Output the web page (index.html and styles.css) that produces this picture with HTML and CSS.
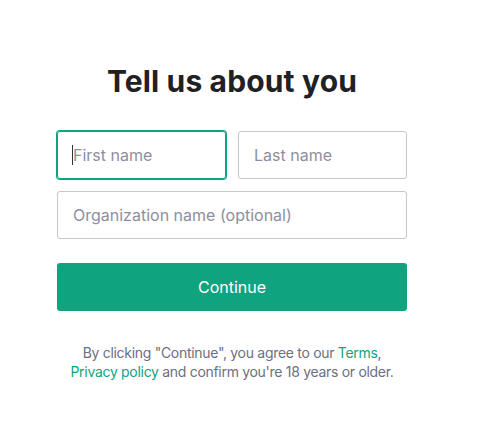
FILE: index.html
```html
<!DOCTYPE html>
<html lang="en">
<head>
<meta charset="utf-8">
<title>Tell us about you</title>
<link rel="stylesheet" href="styles.css">
</head>
<body>
<main class="page">
  <section class="card">
    <h1 class="title">Tell us about you</h1>
    <form class="form">
      <div class="row">
        <div class="field field-focused"><span class="caret"></span><span class="placeholder">First name</span></div>
        <div class="field"><span class="placeholder">Last name</span></div>
      </div>
      <div class="field"><span class="placeholder">Organization name (optional)</span></div>
      <button type="button" class="btn">Continue</button>
    </form>
    <p class="legal">By clicking "Continue", you agree to our <a class="link">Terms</a>,<br><a class="link">Privacy policy</a> and confirm you're 18 years or older.</p>
  </section>
</main>
</body>
</html>
```
FILE: styles.css
```css
* { box-sizing: border-box; }
html, body { margin: 0; padding: 0; background: #ffffff; }
body { font-family: Inter, "Noto Sans", "Liberation Sans", sans-serif; color: #2d333a; }
.page { width: 464px; display: flex; justify-content: center; padding-top: 63px; }
.card { width: 350px; display: flex; flex-direction: column; align-items: stretch; }
.title { margin: 0 0 32px; font-size: 30px; line-height: 36px; font-weight: 700; text-align: center; color: #202123; letter-spacing: 0.15px; }
.form { display: flex; flex-direction: column; gap: 12px; }
.row { display: flex; gap: 12px; }
.row .field { flex: 1 1 0; }
.field { height: 48px; border: 1px solid #c2c8d0; border-radius: 3px; display: flex; align-items: center; padding: 0 15px; font-size: 16px; position: relative; }
.field-focused { border-color: #10a37f; box-shadow: 0 0 0 1px #10a37f; }
.placeholder { color: #8e8ea0; }
.caret { width: 1px; height: 20px; background: #2d333a; position: absolute; left: 14px; top: 13px; }
.btn { margin-top: 12px; height: 48px; border: none; border-radius: 3px; background: #10a37f; color: #ffffff; font: inherit; font-size: 16px; cursor: pointer; }
.legal { margin: 32px 0 0; text-align: center; font-size: 14px; line-height: 19px; color: #6e6e80; letter-spacing: -0.3px; }
.link { color: #10a37f; text-decoration: none; }
```
